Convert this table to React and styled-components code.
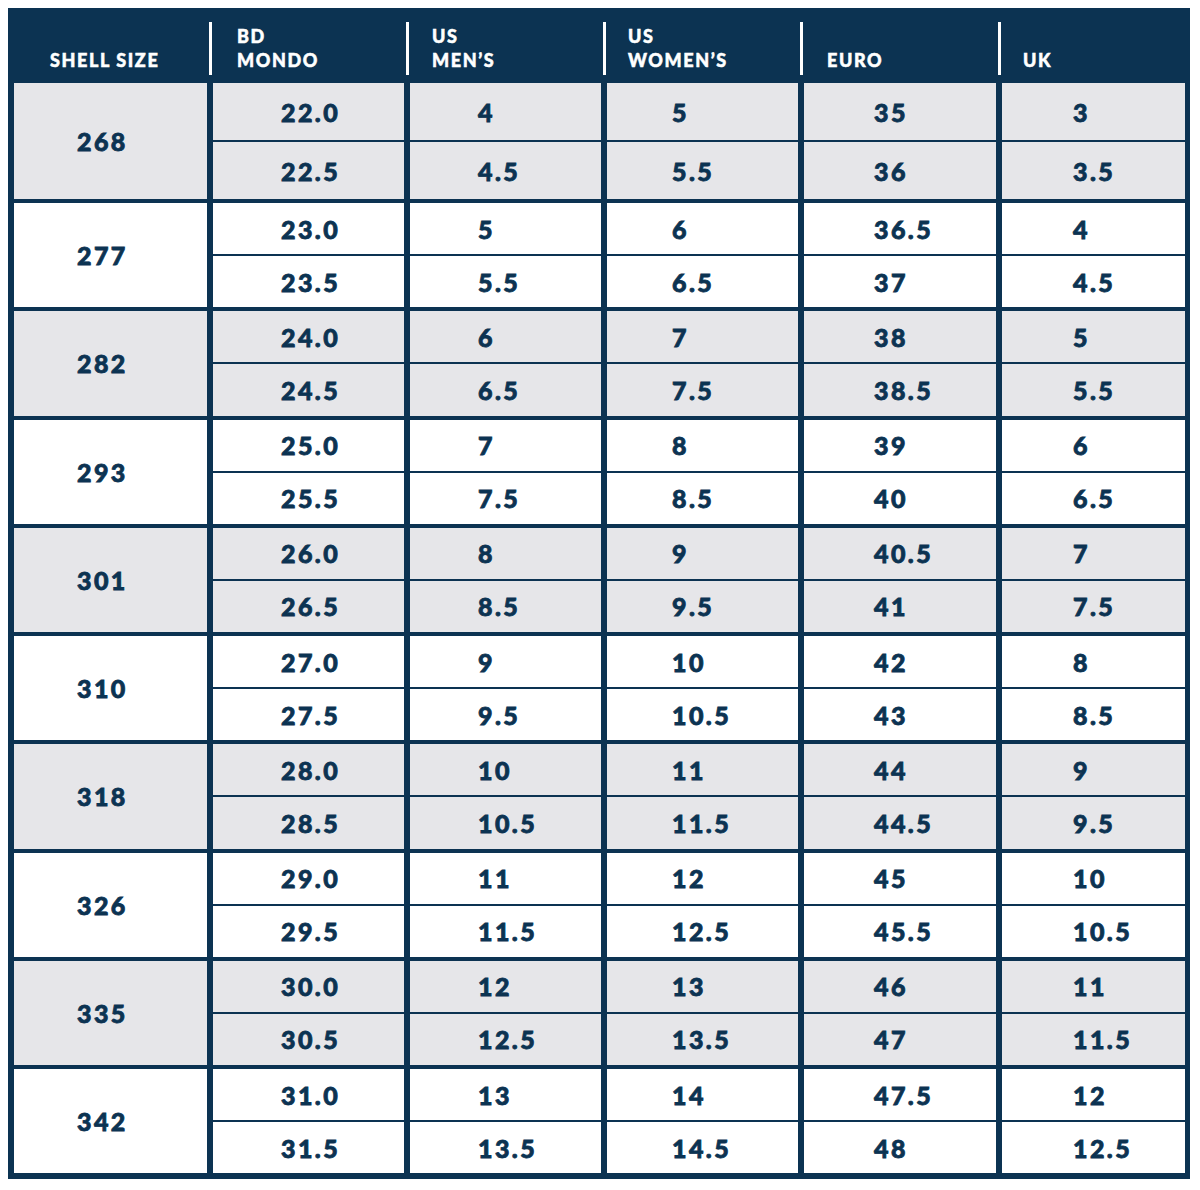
import styled, { createGlobalStyle } from 'styled-components';

const NAVY = '#0c3352';

const GlobalStyle = createGlobalStyle`
    body {
        margin: 0;
        background: #ffffff;
        font-family: "Lato", "Liberation Sans", sans-serif;
    }
`

const Chart = styled.div`
    width: 1182px;
    margin: 8px 0 0 8px;
    background: ${NAVY};
    color: ${NAVY};
`

const HeaderRow = styled.div`
    display: grid;
    grid-template-columns: 193px 6px 191px 6px 191px 6px 191px 6px 192px 6px 183px;
    height: 75px;
    padding: 0 6px;
`

const Divider = styled.div`
    width: 3px;
    justify-self: center;
    margin: 14px 0 8px;
    background: #ffffff;
`

const HeaderCell = styled.div`
    align-self: end;
    padding: 0 0 11px ${({ $pad }) => $pad}px;
    color: #ffffff;
    font-size: 18px;
    font-weight: 900;
    line-height: 24px;
    letter-spacing: 1.6px;
    text-transform: uppercase;
    -webkit-text-stroke: 0.5px #ffffff;
`

const Body = styled.div`
    display: flex;
    flex-direction: column;
    gap: 4px;
    padding: 0 6px 6px;
`

const Group = styled.div`
    display: grid;
    grid-template-columns: 193px 191px 191px 191px 192px 183px;
    grid-template-rows: 1fr 1fr;
    column-gap: 6px;
    row-gap: 2px;
    height: ${({ $tall }) => ($tall ? 116 : 104.25)}px;
`

const Cell = styled.div`
    display: flex;
    align-items: center;
    padding-left: ${({ $pad }) => $pad}px;
    background: ${({ $shade }) => ($shade ? '#e6e6e9' : '#ffffff')};
    font-size: 25px;
    font-weight: 900;
    letter-spacing: 2.4px;
    -webkit-text-stroke: 0.8px ${NAVY};
`

const ShellCell = styled(Cell)`
    grid-row: span 2;
`

const headers = [
    { label: ['Shell Size'], pad: 36 },
    { label: ['BD', 'Mondo'], pad: 24 },
    { label: ['US', 'Men’s'], pad: 22 },
    { label: ['US', 'Women’s'], pad: 21 },
    { label: ['Euro'], pad: 23 },
    { label: ['UK'], pad: 21 },
]

const pads = [63, 68, 68, 65, 70, 71]

const shells = ['268', '277', '282', '293', '301', '310', '318', '326', '335', '342']
const euro = [
    ['35', '36'], ['36.5', '37'], ['38', '38.5'], ['39', '40'], ['40.5', '41'],
    ['42', '43'], ['44', '44.5'], ['45', '45.5'], ['46', '47'], ['47.5', '48'],
]

const half = n => [`${n}`, `${n}.5`]

const groups = shells.map((shell, i) => ({
    shell,
    cols: [
        [`${22 + i}.0`, `${22 + i}.5`],
        half(4 + i),
        half(5 + i),
        euro[i],
        half(3 + i),
    ],
}))

function App() {
    return (
        <>
            <GlobalStyle />
            <Chart>
                <HeaderRow>
                    {headers.map((h, idx) => [
                        idx > 0 && <Divider key={`d${idx}`} />,
                        <HeaderCell key={`h${idx}`} $pad={h.pad}>
                            {h.label.map(line => <div key={line}>{line}</div>)}
                        </HeaderCell>,
                    ])}
                </HeaderRow>
                <Body>
                    {groups.map((g, gi) => {
                        const shade = gi % 2 === 0;
                        return (
                            <Group key={g.shell} $tall={gi === 0}>
                                <ShellCell $pad={pads[0]} $shade={shade}>{g.shell}</ShellCell>
                                {[0, 1].map(row => g.cols.map((col, ci) => (
                                    <Cell
                                        key={`${row}-${ci}`}
                                        $pad={pads[ci + 1]}
                                        $shade={shade}
                                        style={{ gridRow: row + 1, gridColumn: ci + 2 }}
                                    >{col[row]}</Cell>
                                )))}
                            </Group>
                        )
                    })}
                </Body>
            </Chart>
        </>
    )
}

export default App;
